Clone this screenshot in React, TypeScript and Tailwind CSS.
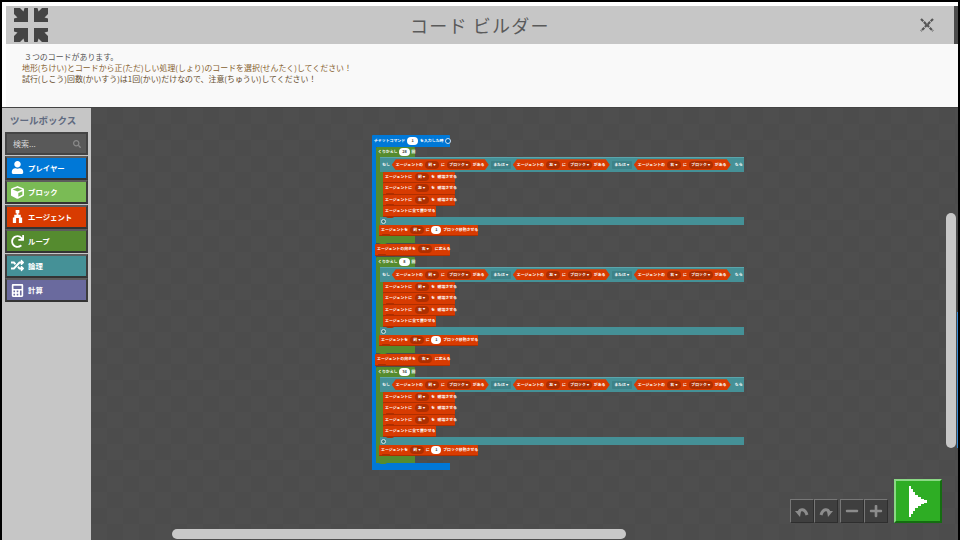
import React from "react";
import { FaUser, FaCube, FaRedo, FaRandom, FaCalculator, FaSearch, FaPlus, FaMinus } from "react-icons/fa";

const jp = "[font-family:'Noto_Sans_CJK_JP','Noto_Sans',sans-serif]";

function Compress() {
  const q = "M0 0H6L9.5 3.5L10.5 0H14V14H0V10.5L3.5 9.5L0 6Z";
  return (
    <svg width="34" height="34" viewBox="0 0 34 34" className="fill-[#444]">
      <path d={q} />
      <path d={q} transform="translate(34 0) scale(-1 1)" />
      <path d={q} transform="translate(0 34) scale(1 -1)" />
      <path d={q} transform="translate(34 34) scale(-1 -1)" />
    </svg>
  );
}

function AgentIcon({ className }: { className?: string }) {
  return (
    <svg viewBox="0 0 14 14" className={className} fill="currentColor">
      <path d="M5 0h4v3.5H8V5h2.5v3H12v6H8.500V8.500h-3V14H2V8h1.500V5H6V3.500H5z" />
    </svg>
  );
}

const tools = [
  { label: "プレイヤー", Icon: FaUser, bg: "bg-[#0078d7]" },
  { label: "ブロック", Icon: FaCube, bg: "bg-[#7abb55]" },
  { label: "エージェント", Icon: AgentIcon, bg: "bg-[#d83b01]" },
  { label: "ループ", Icon: FaRedo, bg: "bg-[#558b2f]" },
  { label: "論理", Icon: FaRandom, bg: "bg-[#459197]" },
  { label: "計算", Icon: FaCalculator, bg: "bg-[#6a6a9e]" },
];

function Tool({ label, Icon, bg }: { label: string; Icon: React.ComponentType<{ className?: string }>; bg: string }) {
  return (
    <div className={`${bg} h-[24px] border-2 border-t-[#5c5c5c] border-l-[#3c3c3c] border-r-[#3c3c3c] border-b-[#333] flex items-center pl-[4px] gap-[4px] text-white`}>
      <Icon className="w-[13px] h-[13px] shrink-0" />
      <span className="text-[7.4px] font-bold leading-none">{label}</span>
    </div>
  );
}

function T({ children }: { children: React.ReactNode }) {
  return <span className="whitespace-nowrap shrink-0">{children}</span>;
}

function Drop({ v, w = "w-[14px]" }: { v: string; w?: string }) {
  return (
    <span className={`${w} bg-[#ad2f01] rounded-full h-[8px] flex items-center justify-center gap-[1px] whitespace-nowrap shrink-0`}>
      {v}
      <span className="text-[2.5px]">▼</span>
    </span>
  );
}

function Num({ v, w = "w-[11px]" }: { v: string; w?: string }) {
  return <span className={`${w} bg-white text-[#444] rounded-full h-[8px] flex items-center justify-center shrink-0`}>{v}</span>;
}

function Tab({ c }: { c: string }) {
  return <span className={`${c} absolute left-[3px] -bottom-[1.5px] w-[8px] h-[2px] rounded-b-[2px]`} />;
}

function Orange({ children, w, h = "h-[11.25px]", ml = "", gap = "gap-[2.5px]" }: { children: React.ReactNode; w: string; h?: string; ml?: string; gap?: string }) {
  return (
    <div className={`${w} ${h} ${ml} ${gap} relative z-10 bg-[#d83b01] border-b border-[#ad2f01] rounded-[1px] flex items-center pl-[2px] text-white text-[3.9px] font-bold leading-none`}>
      {children}
      <Tab c="bg-[#ad2f01]" />
    </div>
  );
}

function Condition({ dir }: { dir: string }) {
  return (
    <div className="h-[11px] w-[97px] shrink-0 bg-[#d83b01] flex items-center gap-[2px] pl-[4px] text-white text-[3.9px] font-bold leading-none [clip-path:polygon(4px_0,93px_0,100%_50%,93px_100%,4px_100%,0_50%)]">
      <T>エージェントの</T>
      <Drop v={dir} />
      <T>に</T>
      <Drop v="ブロック" w="w-[24px]" />
      <T>がある</T>
    </div>
  );
}

function Or() {
  return (
    <span className="w-[20px] bg-[#3d8287] h-[8px] rounded-[1px] flex items-center justify-center gap-[1px] whitespace-nowrap shrink-0">
      または<span className="text-[2.5px]">▼</span>
    </span>
  );
}

function Destroy({ dir }: { dir: string }) {
  return (
    <Orange w="w-[72px]">
      <T>エージェントに</T>
      <Drop v={dir} />
      <T>を</T>
      <T>破壊させる</T>
    </Orange>
  );
}

function Loop({ count }: { count: string }) {
  return (
    <div className="w-[368px]">
      <div className="w-[39px] h-[10px] bg-[#558b2f] rounded-t-[1px] flex items-center gap-[1.5px] pl-[2px] text-white text-[3.9px] font-bold leading-none">
        <T>くりかえし</T>
        <Num v={count} />
        <T>回</T>
      </div>
      <div className="flex">
        <div className="w-[4px] bg-[#558b2f]" />
        <div className="flex-1 min-w-0">
          <div className="w-[364px] h-[15.5px] bg-[#459197] border-t border-[#5aa6ac] flex items-center gap-[2px] pl-[2px] text-white text-[3.9px] font-bold leading-none">
            <T>もし</T>
            <Condition dir="前" />
            <Or />
            <Condition dir="左" />
            <Or />
            <Condition dir="右" />
            <span className="ml-[2px] whitespace-nowrap">なら</span>
          </div>
          <div className="flex">
            <div className="w-[3px] bg-[#558b2f]" />
            <div className="flex flex-col">
              <Destroy dir="前" />
              <Destroy dir="左" />
              <Destroy dir="右" />
              <Orange w="w-[53px]"><T>エージェントに全て置かせる</T></Orange>
            </div>
          </div>
          <div className="w-[364px] h-[8px] bg-[#459197] flex items-center pl-[1px]">
            <span className="w-[5px] h-[5px] rounded-full border border-[#d5e5e6] bg-[#377478]" />
          </div>
          <Orange w="w-[99px]" h="h-[10.5px]" ml="-ml-[1px]" gap="gap-[1.8px]">
            <T>エージェントを</T>
            <Drop v="前" />
            <T>に</T>
            <Num v="1" w="w-[10px]" />
            <T>ブロック移動させる</T>
          </Orange>
        </div>
      </div>
      <div className="w-[39px] h-[7px] bg-[#558b2f] relative"><Tab c="bg-[#558b2f]" /></div>
    </div>
  );
}

function Turn() {
  return (
    <div className="my-[1px] -ml-[1px]">
      <Orange w="w-[75px]" h="h-[12px]">
        <T>エージェントの向きを</T>
        <Drop v="右" />
        <T>に変える</T>
      </Orange>
    </div>
  );
}

function SmallBtn({ children, gapRight = false }: { children: React.ReactNode; gapRight?: boolean }) {
  return (
    <div className={`w-[24px] h-[24px] bg-[#3f3f3f] border border-t-[#777] border-l-[#777] border-r-[#2e2e2e] border-b-[#2e2e2e] flex items-center justify-center text-[#8c8c8c] ${gapRight ? "mr-[2px]" : ""}`}>
      {children}
    </div>
  );
}

function Arc({ flip = false }: { flip?: boolean }) {
  return (
    <svg width="14" height="11" viewBox="0 0 14 11" className={flip ? "-scale-x-100" : ""} fill="currentColor">
      <path d="M0 4l6 0-1 6z" transform="translate(0 1)" />
      <path d="M4 6C5 3 10 2 12 9" fill="none" stroke="currentColor" strokeWidth="3" />
    </svg>
  );
}

export default function App() {
  return (
    <div className={`w-[960px] h-[540px] overflow-hidden bg-black pt-[2px] pl-[2px] pr-[2px] ${jp}`}>
      <div className="h-full bg-white pt-[4px] flex flex-col">
        <div className="flex h-[38px] shrink-0 pl-[4px]">
          <div className="flex-1 bg-[#c6c6c6] flex items-center justify-between pl-[8px] pr-[20px] relative">
            <Compress />
            <span className="absolute left-[404px] top-[7px] text-[18px] leading-[24px] tracking-[1.2px] text-[#5a5a5a] whitespace-pre">コード ビルダー</span>
            <svg width="14" height="14" viewBox="0 0 14 14" className="stroke-[#555]" strokeWidth="2.2">
              <path d="M1 1l12 12M13 1L1 13" strokeDasharray="3.2 0.9" />
            </svg>
          </div>
          <div className="w-[4px] bg-[#4c4c4c]" />
        </div>
        <div className="h-[63px] shrink-0 ml-[4px] bg-[#f9f9f9] pl-[16px] pt-[7px] text-[7.93px] leading-[11px] text-[#555]">
          <div className="pl-[2px]">３つのコードがあります。</div>
          <div className="text-[#85602e]">地形(ちけい)とコードから正(ただ)しい処理(しょり)のコードを選択(せんたく)してください！</div>
          <div className="text-[#664d2e]">試行(しこう)回数(かいすう)は1回(かい)だけなので、注意(ちゅうい)してください！</div>
        </div>
        <div className="flex-1 flex min-h-0 border-t border-[#444]">
          <div className="w-[89px] shrink-0 bg-[#c6c6c6] px-[3px] flex flex-col">
            <div className="h-[24px] flex items-center pl-[5px] text-[#5f6a80] text-[9.5px] font-bold">ツールボックス</div>
            <div className="flex flex-col gap-[0.5px]">
              <div className="h-[23px] bg-[#595959] border-2 border-[#444] flex items-center justify-between pl-[6px] pr-[5px] text-[#d8d8d8] text-[8px]">
                <span>検索...</span>
                <FaSearch className="w-[8px] h-[8px] text-[#8a8a8a]" />
              </div>
              {tools.map((t) => <Tool key={t.label} {...t} />)}
            </div>
          </div>
          <div className="flex-1 relative bg-[#4c4c4c] bg-[conic-gradient(#0000_25%,#ffffff03_0_50%,#0000_0_75%,#ffffff03_0)] bg-[size:32px_32px] overflow-hidden">
            <div className="absolute left-[281px] top-[27px] w-[372px]">
              <div className="w-[78px] h-[11.5px] bg-[#0078d7] rounded-t-[1px] flex items-center gap-[2px] pl-[2px] text-white text-[3.9px] font-bold leading-none">
                <T>チャットコマンド</T>
                <Num v="1" />
                <T>を入力した時</T>
                <span className="w-[6px] h-[6px] rounded-full border border-[#cfe3f5] bg-[#0060ac] shrink-0" />
              </div>
              <div className="flex">
                <div className="w-[4px] bg-[#0078d7]" />
                <div className="flex flex-col">
                  <Loop count="28" />
                  <Turn />
                  <Loop count="8" />
                  <Turn />
                  <Loop count="34" />
                </div>
              </div>
              <div className="w-[78px] h-[7.5px] bg-[#0078d7]" />
            </div>
            <div className="absolute right-[2px] top-[105px] w-[10px] h-[235px] rounded-full bg-[#c8c8c8]" />
            <div className="absolute right-0 top-[204px] w-[1.5px] h-[136px] bg-[#3b8fdc]" />
            <div className="absolute left-[81px] bottom-[1px] w-[454px] h-[10px] rounded-full bg-[#c8c8c8]" />
            <div className="absolute right-[16px] bottom-[17px] flex items-end gap-[6px]">
              <div className="flex">
                <SmallBtn><Arc /></SmallBtn>
                <SmallBtn gapRight><Arc flip /></SmallBtn>
                <SmallBtn><FaMinus className="w-[14px] h-[14px]" /></SmallBtn>
                <SmallBtn><FaPlus className="w-[14px] h-[14px]" /></SmallBtn>
              </div>
              <div className="w-[48px] h-[44px] bg-[#2ead24] border-2 border-t-[#8ad884] border-l-[#8ad884] border-r-[#146e10] border-b-[#146e10] flex items-center justify-center">
                <svg width="18" height="31" viewBox="0 0 18 31" className="fill-white"><path d="M0 0H2V3H4V6H6V9H9V11H12V13H15V14H18V17H15V18H12V20H9V22H6V25H4V28H2V31H0Z" /></svg>
              </div>
            </div>
          </div>
        </div>
      </div>
    </div>
  );
}
